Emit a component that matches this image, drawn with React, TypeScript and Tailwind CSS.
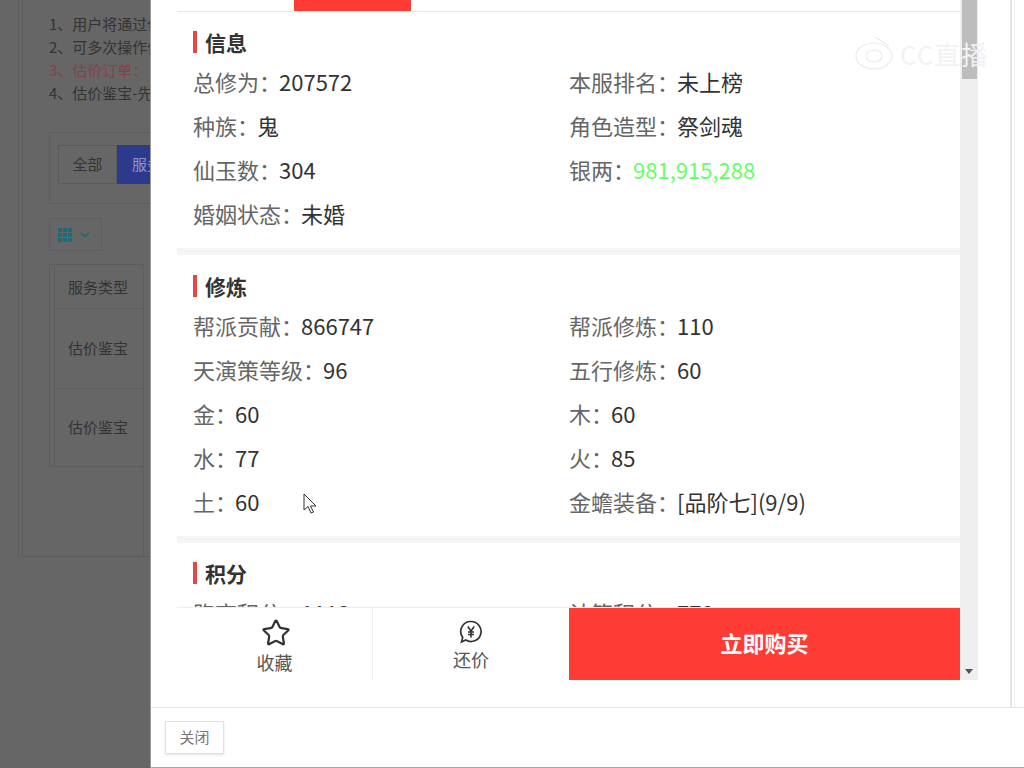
import { Star, ChevronDown } from 'lucide-react';

const Row = ({ label, value, valueClass }: { label: string; value: string; valueClass?: string }) => (
  <div className="h-[44px] leading-[44px] whitespace-nowrap text-[22px] text-[#666]">
    {label}
    {'\uFF1A'}
    <span className="-ml-[2px]">
      <span className={valueClass ?? 'text-[#333]'}>{value}</span>
    </span>
  </div>
);

const Title = ({ children }: { children: string }) => (
  <div className="flex items-center h-[22px]">
    <span className="w-[4px] h-[22px] bg-[#e84545] mr-[8px]" />
    <span className="text-[21px] font-bold text-[#333] leading-[22px]">{children}</span>
  </div>
);

const Section = ({ title, rows }: { title: string; rows: [string, string, string?][] }) => (
  <div className="px-[16px]">
    <Title>{title}</Title>
    <div className="grid grid-cols-[376px_1fr] mt-[6px]">
      {rows.map(([label, value, cls]) => (
        <Row key={label} label={label} value={value} valueClass={cls} />
      ))}
    </div>
  </div>
);

export default function App() {
  return (
    <div
      className="relative flex h-[768px] w-[1024px] overflow-hidden bg-white"
      style={{ fontFamily: '"Noto Sans CJK SC", "Noto Sans", sans-serif' }}
    >
      {/* dimmed page behind the dialog */}
      <div className="w-[151px] shrink-0 bg-[#666] border-r border-[#999] overflow-hidden">
        <div className="ml-[18px] w-[200px] h-[557px] border-l border-[#5e5e5e] pl-[3px]">
          <div className="h-[557px] border-l border-b border-[#5c5c5c] pl-[26px] text-[15px] text-[#333] whitespace-nowrap">
            <div className="pt-[12px] leading-[23px]">
              <div>1、用户将通过估价</div>
              <div>2、可多次操作估价</div>
              <div className="text-[#86404a]">3、估价订单{'\uFF1A'}</div>
              <div>4、估价鉴宝-先估价</div>
            </div>
            <div className="mt-[28px] h-[72px] border-t border-b border-l border-[#5e5e5e] pl-[8px] pt-[12px] flex">
              <div className="h-[39px] w-[59px] shrink-0 border border-[#5a5a5a] flex items-center justify-center text-[#333]">全部</div>
              <div className="h-[39px] w-[60px] shrink-0 bg-[#2d3a8c] flex items-center pl-[15px] text-[#8f97c7]">服务</div>
            </div>
            <div className="mt-[14px] h-[33px] w-[53px] border border-[#5e5e5e] flex items-center pl-[8px] gap-[6px]">
              <span className="grid grid-cols-3 gap-[1px] w-[14px] shrink-0">
                {Array.from({ length: 9 }).map((_, i) => (
                  <span key={i} className="h-[4px] bg-[#1d6a78]" />
                ))}
              </span>
              <ChevronDown className="w-[14px] h-[14px] text-[#1d6a78] shrink-0" strokeWidth={3} />
            </div>
            <div className="mt-[13px] w-[95px] h-[292px] border-r border-[#5e5e5e]">
              <div className="border-t border-b border-l border-[#5c5c5c] text-[15px] text-[#333]">
                <div className="ml-[4px] border-l border-[#5e5e5e]">
                  <div className="h-[44px] leading-[44px] border-b border-[#5e5e5e] pl-[13px]">服务类型</div>
                  <div className="h-[80px] leading-[78px] border-b border-[#5e5e5e] pl-[13px]">估价鉴宝</div>
                  <div className="h-[77px] leading-[75px] pl-[13px]">估价鉴宝</div>
                </div>
              </div>
            </div>
          </div>
        </div>
      </div>

      {/* dialog */}
      <div className="flex-1 flex flex-col min-w-0">
        <div className="h-[708px] border-b border-[#e6e6e6] flex shrink-0">
          <div className="w-[26px] shrink-0" />
          <div className="w-[783px] shrink-0 flex flex-col h-[680px]">
            <div className="h-[608px] overflow-hidden border-b border-[#eee]">
              <div className="h-[12px] border-b border-[#e8e8e8] pl-[117px]">
                <div className="w-[117px] h-[11px] bg-[#ff3b36]" />
              </div>
              <div className="pt-[19px]">
                <Section
                  title="信息"
                  rows={[
                    ['总修为', '207572'],
                    ['本服排名', '未上榜'],
                    ['种族', '鬼'],
                    ['角色造型', '祭剑魂'],
                    ['仙玉数', '304'],
                    ['银两', '981,915,288', 'text-[#66ff66]'],
                    ['婚姻状态', '未婚'],
                  ]}
                />
              </div>
              <div className="h-[7px] bg-[#f5f5f5] mt-[13px]" />
              <div className="pt-[20px]">
                <Section
                  title="修炼"
                  rows={[
                    ['帮派贡献', '866747'],
                    ['帮派修炼', '110'],
                    ['天演策等级', '96'],
                    ['五行修炼', '60'],
                    ['金', '60'],
                    ['木', '60'],
                    ['水', '77'],
                    ['火', '85'],
                    ['土', '60'],
                    ['金蟾装备', '[品阶七](9/9)'],
                  ]}
                />
              </div>
              <div className="h-[7px] bg-[#f5f5f5] mt-[13px]" />
              <div className="pt-[19px]">
                <Section
                  title="积分"
                  rows={[
                    ['跑商积分', '1113'],
                    ['计策积分', '770'],
                  ]}
                />
              </div>
            </div>
            <div className="h-[72px] flex">
              <div className="w-[196px] border-r border-[#eee] flex flex-col items-center pt-[10px] text-[#555] text-[18px] leading-[24px]">
                <Star className="w-[30px] h-[30px] text-[#333] translate-x-[1px]" strokeWidth={1.8} />
                <span className="mt-[2px]">收藏</span>
              </div>
              <div className="w-[196px] flex flex-col items-center pt-[12px] text-[#555] text-[18px] leading-[24px]">
                <svg viewBox="0 0 24 24" className="w-[24px] h-[24px]" fill="none" stroke="#333" strokeWidth="1.7">
                  <path d="M12 1.5a10 10 0 1 1-5.2 18.5L2.5 22l1.2-4.6A10 10 0 0 1 12 1.5z" />
                  <path d="M8.8 6.5 12 11l3.2-4.5M12 11v6.5M9 12h6M9 14.5h6" strokeWidth="1.6" />
                </svg>
                <span className="mt-[3px]">还价</span>
              </div>
              <div className="flex-1 bg-[#ff3b36] flex items-center justify-center text-white font-bold text-[22px] pb-[4px]">
                立即购买
              </div>
            </div>
          </div>
          <div className="w-[18px] h-[680px] bg-[#efefef] shrink-0 relative">
            <div className="h-[79px] w-[15px] ml-[2px] bg-[#bdbdbd]" />
            <div className="absolute bottom-[6px] left-[5px] w-0 h-0 border-x-[4px] border-x-transparent border-t-[5px] border-t-[#555]" />
          </div>
          <div className="w-[32px] shrink-0" />
          <div className="w-[2px] h-full bg-[#e6e6e6]" />
          <div className="w-[3px] h-full border-r border-[#efefef]" />
        </div>
        <div className="flex-1 border-b border-[#aaa] pl-[14px] pt-[13px]">
          <button className="w-[59px] h-[33px] border border-[#e2e2e2] shadow-[0_1px_2px_rgba(0,0,0,0.12)] text-[15px] text-[#777]">
            关闭
          </button>
        </div>
      </div>

      {/* mouse cursor */}
      <svg viewBox="0 0 14 22" className="absolute left-[303px] top-[493px] w-[14px] h-[22px]" fill="#fff" stroke="#333" strokeWidth="1">
        <path d="M1 1v16l4-3.5L8 20l2.5-1-3-6H13z" />
      </svg>

      {/* watermark */}
      <div className="absolute left-[855px] top-[34px] flex items-center gap-[7px] pointer-events-none">
        <svg viewBox="0 0 38 40" className="w-[38px] h-[40px]" fill="none" stroke="#ececec" strokeWidth="1.2">
          <ellipse cx="19" cy="22" rx="18" ry="13" />
          <ellipse cx="19" cy="22" rx="8" ry="6" />
          <path d="M20 3l14 9" />
        </svg>
        <span className="text-[26px] tracking-[1px] leading-[40px] whitespace-nowrap text-[#f2f2f2]">CC直播</span>
      </div>
    </div>
  );
}
